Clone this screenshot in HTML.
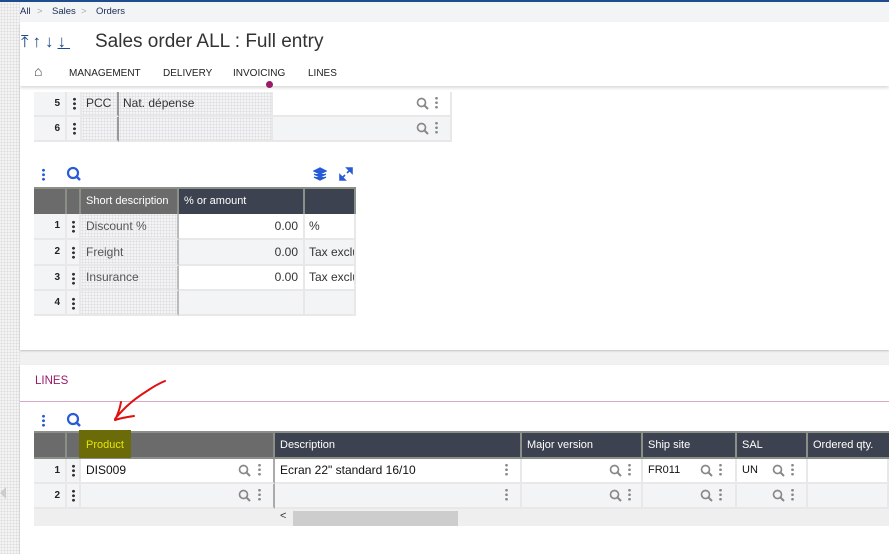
<!DOCTYPE html>
<html><head><meta charset="utf-8"><style>
*{box-sizing:border-box;margin:0;padding:0}
body{width:889px;height:554px;overflow:hidden;background:#f1f1f1;font-family:"Liberation Sans",sans-serif;position:relative;color:#333}
.a{position:absolute}
.gut{left:0;top:0;width:20px;height:554px;background-image:radial-gradient(#ddd 1px,transparent 1px);background-size:3px 3px;background-color:#f4f4f4}
.th{position:absolute;color:#fff;font-size:11px;line-height:26px;padding-left:5px;border-right:2px solid #8a8f88}
.cell{position:absolute;font-size:12px;border-right:2px solid #e8e8e8;border-bottom:2px solid #e8e8e8}
.num{font-weight:bold;font-size:10px;text-align:right;padding-right:5px;color:#222}
.dots{width:3px;height:13px;background:radial-gradient(circle,#333 1.3px,transparent 1.6px) 0 0/3px 4.5px repeat-y}
.gd{width:3px;height:13px;background:radial-gradient(circle,#888 1.2px,transparent 1.5px) 0 0/3px 4.5px repeat-y}
.bd{width:3px;height:13px;background:radial-gradient(circle,#2a5bd7 1.3px,transparent 1.6px) 0 0/3px 4.5px repeat-y}
.dot{background-image:radial-gradient(#ddd 0.8px,transparent 0.8px);background-size:3px 3px}
.mg{position:absolute;width:13px;height:13px}
</style></head><body>
<svg width="0" height="0" style="position:absolute"><defs><symbol id="m" viewBox="0 0 13 13"><circle cx="5.5" cy="5.5" r="4" fill="none" stroke="#888" stroke-width="1.7"/><path d="M8.5 8.5L12 12" stroke="#888" stroke-width="2"/></symbol></defs></svg>
<div class="a gut"></div>
<div class="a" style="left:0;top:0;width:889px;height:2px;background:#1f4b8f"></div>
<div class="a" style="left:20px;top:2px;width:869px;height:20px;background:#f3f4f6;font-size:9.5px;line-height:20px;color:#1a2a55">
<span class="a" style="left:0">All</span><span class="a" style="left:17px;color:#aaa">&gt;</span><span class="a" style="left:32px">Sales</span><span class="a" style="left:61px;color:#aaa">&gt;</span><span class="a" style="left:76px">Orders</span></div>
<div class="a" style="left:20px;top:22px;width:869px;height:64px;background:#fff;box-shadow:0 2px 3px rgba(0,0,0,.15);z-index:2">
<div class="a" style="left:1px;top:10px;font-size:17px;color:#1e4a8a;letter-spacing:4px">⤒↑↓<u>↓</u></div>
<div class="a" style="left:75px;top:9px;font-size:19px;color:#333">Sales order ALL : Full entry</div>
<div class="a" style="left:14px;top:41px;font-size:14px;color:#444">⌂</div>
<div class="a" style="left:49px;top:46px;font-size:10px;color:#222">MANAGEMENT</div>
<div class="a" style="left:143px;top:46px;font-size:10px;color:#222">DELIVERY</div>
<div class="a" style="left:213px;top:46px;font-size:10px;color:#222">INVOICING</div>
<div class="a" style="left:288px;top:46px;font-size:10px;color:#222">LINES</div>
<div class="a" style="left:246px;top:59px;width:7px;height:7px;border-radius:50%;background:#9b1a6a"></div>
</div>
<!-- card 1 -->
<div class="a" style="left:20px;top:86px;width:869px;height:264px;background:#fff;box-shadow:0 1px 2px rgba(0,0,0,.2)"></div>
<div class="a" style="left:34px;top:92px;width:418px;height:50px;background:#f3f4f6"></div>
<div class="cell num" style="left:34px;top:92px;width:33px;height:25px;line-height:23px">5</div>
<div class="cell" style="left:67px;top:92px;width:15px;height:25px"><div class="a dots" style="left:6px;top:5px"></div></div>
<div class="cell dot" style="left:82px;top:92px;width:37px;height:25px;line-height:23px;padding-left:4px;border-right:2px solid #999">PCC</div>
<div class="cell dot" style="left:119px;top:92px;width:154px;height:25px;line-height:23px;padding-left:4px">Nat. dépense</div>
<div class="cell" style="left:273px;top:92px;width:179px;height:25px;background:#fff"><svg class="mg" style="left:143px;top:5px"><use href="#m"/></svg><div class="a gd" style="left:162px;top:4px"></div></div>
<div class="cell num" style="left:34px;top:117px;width:33px;height:25px;line-height:23px">6</div>
<div class="cell" style="left:67px;top:117px;width:15px;height:25px"><div class="a dots" style="left:6px;top:5px"></div></div>
<div class="cell dot" style="left:82px;top:117px;width:37px;height:25px;border-right:2px solid #999"></div>
<div class="cell dot" style="left:119px;top:117px;width:154px;height:25px"></div>
<div class="cell" style="left:273px;top:117px;width:179px;height:25px"><svg class="mg" style="left:143px;top:5px"><use href="#m"/></svg><div class="a gd" style="left:162px;top:4px"></div></div>
<!-- table 2 -->
<div class="a bd" style="left:42px;top:168px"></div>
<svg class="a" style="left:66px;top:166px" width="16" height="16"><circle cx="7" cy="7" r="5" fill="none" stroke="#2a5bd7" stroke-width="2.2"/><path d="M10.5 10.5L14 14" stroke="#2a5bd7" stroke-width="2.5"/></svg>
<svg class="a" style="left:313px;top:167px" width="14" height="14"><path d="M7 1L13 4L7 7L1 4Z M1 7L7 10L13 7 M1 10L7 13L13 10" fill="#2a5bd7" stroke="#2a5bd7" stroke-width="1.3"/></svg>
<svg class="a" style="left:339px;top:167px" width="14" height="14"><path d="M8 1H13V6Z M6 13H1V8Z M12 2L8 6 M2 12L6 8" fill="#2a5bd7" stroke="#2a5bd7" stroke-width="1.6"/></svg>
<div class="a" style="left:34px;top:187px;width:322px;height:27px;background:#3d4250;border:2px solid #8a8f88"></div>
<div class="th" style="left:34px;top:187px;width:33px;height:27px;background:#6b6b6b;border-top:2px solid #8a8f88"></div>
<div class="th" style="left:67px;top:187px;width:14px;height:27px;background:#6b6b6b;border-top:2px solid #8a8f88"></div>
<div class="th" style="left:81px;top:187px;width:98px;height:27px;background:#6b6b6b;border-top:2px solid #8a8f88;line-height:24px">Short description</div>
<div class="th" style="left:179px;top:187px;width:126px;height:27px;background:#3d4250;border-top:2px solid #8a8f88;line-height:24px">% or amount</div>
<div class="th" style="left:305px;top:187px;width:51px;height:27px;background:#3d4250;border-top:2px solid #8a8f88"></div>
<div class="a" style="left:34px;top:214px;width:322px;height:102px;background:#f3f4f6"></div>
<div class="cell num" style="left:34px;top:214px;width:33px;height:26px;line-height:24px">1</div><div class="cell" style="left:67px;top:214px;width:14px;height:26px"><div class="a dots" style="left:5px;top:6px"></div></div><div class="cell dot" style="left:81px;top:214px;width:98px;height:26px;line-height:24px;padding-left:5px;color:#555;border-right:2px solid #bbb">Discount %</div><div class="cell" style="left:179px;top:214px;width:126px;height:26px;line-height:24px;text-align:right;padding-right:5px;background:#fff">0.00</div><div class="cell" style="left:305px;top:214px;width:51px;height:26px;line-height:24px;padding-left:4px;background:#fff;overflow:hidden;white-space:nowrap">%</div>
<div class="cell num" style="left:34px;top:240px;width:33px;height:26px;line-height:24px">2</div><div class="cell" style="left:67px;top:240px;width:14px;height:26px"><div class="a dots" style="left:5px;top:6px"></div></div><div class="cell dot" style="left:81px;top:240px;width:98px;height:26px;line-height:24px;padding-left:5px;color:#555;border-right:2px solid #bbb">Freight</div><div class="cell" style="left:179px;top:240px;width:126px;height:26px;line-height:24px;text-align:right;padding-right:5px">0.00</div><div class="cell" style="left:305px;top:240px;width:51px;height:26px;line-height:24px;padding-left:4px;overflow:hidden;white-space:nowrap">Tax exclu</div>
<div class="cell num" style="left:34px;top:266px;width:33px;height:25px;line-height:23px">3</div><div class="cell" style="left:67px;top:266px;width:14px;height:25px"><div class="a dots" style="left:5px;top:6px"></div></div><div class="cell dot" style="left:81px;top:266px;width:98px;height:25px;line-height:23px;padding-left:5px;color:#555;border-right:2px solid #bbb">Insurance</div><div class="cell" style="left:179px;top:266px;width:126px;height:25px;line-height:23px;text-align:right;padding-right:5px;background:#fff">0.00</div><div class="cell" style="left:305px;top:266px;width:51px;height:25px;line-height:23px;padding-left:4px;background:#fff;overflow:hidden;white-space:nowrap">Tax exclu</div>
<div class="cell num" style="left:34px;top:291px;width:33px;height:25px;line-height:23px">4</div><div class="cell" style="left:67px;top:291px;width:14px;height:25px"><div class="a dots" style="left:5px;top:6px"></div></div><div class="cell dot" style="left:81px;top:291px;width:98px;height:25px;border-right:2px solid #bbb"></div><div class="cell" style="left:179px;top:291px;width:126px;height:25px"></div><div class="cell" style="left:305px;top:291px;width:51px;height:25px"></div>
<!-- card 2 -->
<div class="a" style="left:20px;top:365px;width:869px;height:189px;background:#fff;box-shadow:0 1px 2px rgba(0,0,0,.2)"></div>
<div class="a" style="left:35px;top:375px;font-size:11.5px;color:#9b1a6a">LINES</div>
<div class="a" style="left:20px;top:401px;width:869px;height:1px;background:#d8a8c4"></div>
<div class="a" style="left:0;top:487px;width:6px;height:12px;background:#ccc;clip-path:polygon(100% 0,0 50%,100% 100%)"></div>
<div class="a bd" style="left:42px;top:414px"></div>
<svg class="a" style="left:66px;top:412px" width="16" height="16"><circle cx="7" cy="7" r="5" fill="none" stroke="#2a5bd7" stroke-width="2.2"/><path d="M10.5 10.5L14 14" stroke="#2a5bd7" stroke-width="2.5"/></svg>
<div class="a" style="left:34px;top:431px;width:855px;height:28px;background:#3d4250;border-top:2px solid #8a8f88;border-bottom:2px solid #8a8f88"></div>
<div class="th" style="left:34px;top:431px;width:33px;height:28px;background:#6b6b6b;border-top:2px solid #8a8f88;border-bottom:2px solid #8a8f88"></div>
<div class="th" style="left:67px;top:431px;width:14px;height:28px;background:#6b6b6b;border-top:2px solid #8a8f88;border-bottom:2px solid #8a8f88"></div>
<div class="th" style="left:81px;top:431px;width:194px;height:28px;background:#6b6b6b;border-top:2px solid #8a8f88;border-bottom:2px solid #8a8f88"></div>
<div class="a" style="left:79px;top:430px;width:52px;height:28px;background:#6b6b0a"></div>
<div class="a" style="left:86px;top:439px;font-size:11px;color:#e6e600">Product</div>
<div class="th" style="left:275px;top:431px;width:247px;height:28px;border-top:2px solid #8a8f88;border-bottom:2px solid #8a8f88;line-height:24px">Description</div>
<div class="th" style="left:522px;top:431px;width:121px;height:28px;border-top:2px solid #8a8f88;border-bottom:2px solid #8a8f88;line-height:24px">Major version</div>
<div class="th" style="left:643px;top:431px;width:94px;height:28px;border-top:2px solid #8a8f88;border-bottom:2px solid #8a8f88;line-height:24px">Ship site</div>
<div class="th" style="left:737px;top:431px;width:71px;height:28px;border-top:2px solid #8a8f88;border-bottom:2px solid #8a8f88;line-height:24px">SAL</div>
<div class="th" style="left:808px;top:431px;width:81px;height:28px;border-top:2px solid #8a8f88;border-bottom:2px solid #8a8f88;line-height:24px;border-right:0">Ordered qty.</div>
<div class="a" style="left:34px;top:459px;width:855px;height:50px;background:#f3f4f6"></div>
<!-- row1 -->
<div class="cell num" style="left:34px;top:459px;width:33px;height:25px;line-height:23px">1</div><div class="cell" style="left:67px;top:459px;width:14px;height:25px"><div class="a dots" style="left:5px;top:5px"></div></div>
<div class="cell" style="left:81px;top:459px;width:194px;height:25px;line-height:23px;padding-left:5px;background:#fff;color:#111;border-right:2px solid #aaa">DIS009<svg class="mg" style="left:157px;top:5px"><use href="#m"/></svg><div class="a gd" style="left:177px;top:4px"></div></div>
<div class="cell" style="left:275px;top:459px;width:247px;height:25px;line-height:23px;padding-left:5px;background:#fff;color:#111">Ecran 22" standard 16/10<div class="a gd" style="left:230px;top:4px"></div></div>
<div class="cell" style="left:522px;top:459px;width:121px;height:25px;background:#fff"><svg class="mg" style="left:87px;top:5px"><use href="#m"/></svg><div class="a gd" style="left:106px;top:4px"></div></div>
<div class="cell" style="left:643px;top:459px;width:94px;height:25px;line-height:23px;padding-left:5px;background:#fff;color:#111;font-size:11px">FR011<svg class="mg" style="left:57px;top:5px"><use href="#m"/></svg><div class="a gd" style="left:76px;top:4px"></div></div>
<div class="cell" style="left:737px;top:459px;width:71px;height:25px;line-height:23px;padding-left:5px;background:#fff;color:#111;font-size:11px">UN<svg class="mg" style="left:35px;top:5px"><use href="#m"/></svg><div class="a gd" style="left:54px;top:4px"></div></div>
<div class="cell" style="left:808px;top:459px;width:81px;height:25px;background:#fff"></div>
<!-- row2 -->
<div class="cell num" style="left:34px;top:484px;width:33px;height:25px;line-height:23px">2</div><div class="cell" style="left:67px;top:484px;width:14px;height:25px"><div class="a dots" style="left:5px;top:5px"></div></div>
<div class="cell" style="left:81px;top:484px;width:194px;height:25px;border-right:2px solid #aaa"><svg class="mg" style="left:157px;top:5px"><use href="#m"/></svg><div class="a gd" style="left:177px;top:4px"></div></div>
<div class="cell" style="left:275px;top:484px;width:247px;height:25px"><div class="a gd" style="left:230px;top:4px"></div></div>
<div class="cell" style="left:522px;top:484px;width:121px;height:25px"><svg class="mg" style="left:87px;top:5px"><use href="#m"/></svg><div class="a gd" style="left:106px;top:4px"></div></div>
<div class="cell" style="left:643px;top:484px;width:94px;height:25px"><svg class="mg" style="left:57px;top:5px"><use href="#m"/></svg><div class="a gd" style="left:76px;top:4px"></div></div>
<div class="cell" style="left:737px;top:484px;width:71px;height:25px"><svg class="mg" style="left:35px;top:5px"><use href="#m"/></svg><div class="a gd" style="left:54px;top:4px"></div></div>
<div class="cell" style="left:808px;top:484px;width:81px;height:25px"></div>
<!-- scrollbar -->
<div class="a" style="left:34px;top:509px;width:855px;height:17px;background:#efefef"></div>
<div class="a" style="left:280px;top:510px;font-size:11px;color:#333">&lt;</div>
<div class="a" style="left:293px;top:511px;width:165px;height:15px;background:#cdcdcd"></div>
<!-- red arrow -->
<svg class="a" style="left:105px;top:375px" width="70" height="55"><path d="M60 6C55 8 48 12 42 16C34 21 26 27 20 33C16 37 13 40 10 44M16 27C15 33 13 39 10 45C16 43 22 42 29 41" fill="none" stroke="#e01010" stroke-width="2" stroke-linecap="round" stroke-linejoin="round"/></svg>
</body></html>
